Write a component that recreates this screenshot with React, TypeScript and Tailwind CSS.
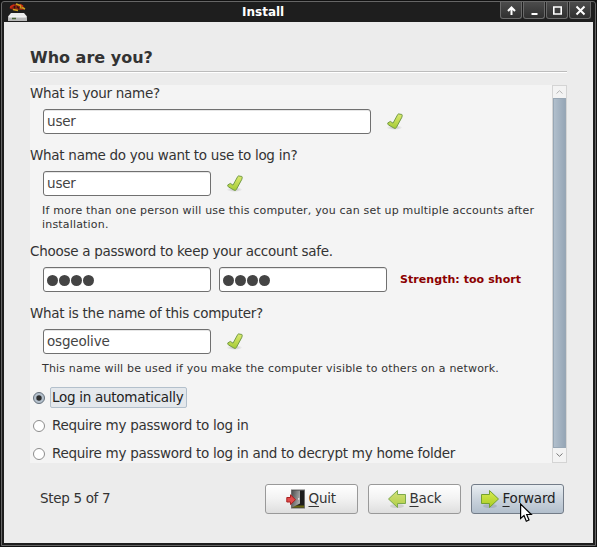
import type { ReactNode } from 'react';

function Label({ children }: { children: ReactNode }) {
  return <div className="h-4 whitespace-nowrap text-[13.5px] leading-4 tracking-[-0.28px]">{children}</div>;
}

function Note({ children }: { children: ReactNode }) {
  return (
    <div className="ml-3 mt-2 -mb-px whitespace-nowrap text-[11px] leading-[14px] tracking-[0.18px]">{children}</div>
  );
}

function Field({ value, wide = false, secret = false }: { value: string; wide?: boolean; secret?: boolean }) {
  return (
    <div
      className={`flex h-[25px] items-center rounded-[3px] border border-[#707070] bg-white pl-[3px] text-[13.5px] tracking-[-0.18px] text-[#444] shadow-[inset_0_1px_0_#e6e6e6] ${
        wide ? 'w-[328px]' : 'w-[168px]'
      }`}
    >
      {secret ? (
        <span className="flex gap-px pt-[2px]">
          {value.split('').map((_, i) => (
            <i key={i} className="size-[11px] rounded-full bg-[#444]" />
          ))}
        </span>
      ) : (
        value
      )}
    </div>
  );
}

function Check() {
  return (
    <svg className="ml-4 mt-1 block" width="17" height="18" viewBox="0 0 17 18">
      <defs>
        <linearGradient id="ck" x1="0" y1="0" x2="0" y2="1">
          <stop offset="0" stopColor="#dcea70" />
          <stop offset="1" stopColor="#a5cc35" />
        </linearGradient>
        <radialGradient id="cks">
          <stop offset="0" stopColor="#000" stopOpacity=".22" />
          <stop offset="1" stopColor="#000" stopOpacity="0" />
        </radialGradient>
      </defs>
      <ellipse cx="7.5" cy="14.6" rx="8" ry="2.4" fill="url(#cks)" />
      <path
        d="M.8 9.9 L3.4 8.4 L6 10.2 L10.8 1.4 Q11.2 .7 12 1 L14.8 1.5 Q15.4 1.7 15.2 2.4 L14.9 4.2 L9.3 14.6 Q8.4 16 7 15.1 L1.3 11.8 Q.5 11 .8 9.9Z"
        fill="url(#ck)"
        stroke="#739b45"
        strokeWidth="1"
      />
    </svg>
  );
}

function Radio({ label, on = false }: { label: string; on?: boolean }) {
  return (
    <div className="flex h-5 items-center">
      <svg className="ml-[3px] mt-px shrink-0" width="12" height="12" viewBox="0 0 12 12">
        <circle cx="6" cy="6" r="5.5" fill={on ? '#b4c0cc' : '#fff'} stroke={on ? '#66717c' : '#8c8c8c'} />
        {on && <circle cx="6" cy="6" r="2.7" fill="#2d2d2d" />}
      </svg>
      <div
        className={`ml-[5px] flex h-[21px] shrink-0 items-center whitespace-nowrap rounded-[2px] border px-px pt-px text-[13.5px] tracking-[-0.28px] ${
          on ? 'w-[137px] border-[#b3c0cc] bg-[#e4e8ec] text-[#222]' : 'border-transparent'
        }`}
      >
        {label}
      </div>
    </div>
  );
}

function Arrow({ back = false }: { back?: boolean }) {
  return (
    <svg width="20" height="20" viewBox="0 0 20 20" className="block">
      <defs>
        <linearGradient id={back ? 'ab' : 'af'} x1="0" y1="0" x2="0" y2="1">
          <stop offset="0" stopColor={back ? '#d2e07a' : '#d8ec52'} />
          <stop offset="1" stopColor={back ? '#b1cf45' : '#a8cb22'} />
        </linearGradient>
      </defs>
      <ellipse cx="10" cy="17" rx="7" ry="2" fill="#000" opacity=".1" />
      <path
        d="M1.5 5.5H9.5V1.5L18.5 10L9.5 18.5V14.5H1.5Z"
        transform={back ? 'translate(20 0) scale(-1 1)' : undefined}
        fill={`url(#${back ? 'ab' : 'af'})`}
        stroke={back ? '#7da94c' : '#74a12f'}
        strokeLinejoin="round"
      />
    </svg>
  );
}

function Door() {
  return (
    <svg width="20" height="20" viewBox="0 0 20 20" className="block">
      <defs>
        <linearGradient id="door" x1="0" y1="0" x2="1" y2="0.4">
          <stop offset="0" stopColor="#4e4e4e" />
          <stop offset="1" stopColor="#a8a8a8" />
        </linearGradient>
      </defs>
      <rect x="5.5" y="1" width="13" height="18" fill="#1c1c1c" stroke="#6d6d6d" />
      <path d="M6 18.5V16.5H18V18.5Z" fill="#66650f" />
      <path d="M6 1.5H14V14.5L6 18.5Z" fill="url(#door)" />
      <rect x="12" y="9" width="1.3" height="1.8" fill="#ddd" />
      <path d="M.8 8.5H4.5V5.8L9.5 10.7L4.5 15.6V13H.8Z" fill="#e04a4a" stroke="#a82020" />
    </svg>
  );
}

function PushButton({ icon, text, primary = false }: { icon: ReactNode; text: string; primary?: boolean }) {
  return (
    <div
      className={`flex h-[30px] w-[93px] items-center rounded-[3px] border text-[13.5px] tracking-[-0.2px] ${
        primary
          ? 'border-[#737c88] bg-linear-to-b from-[#e9eef2] via-[#cbd4dd] to-[#b2bfcc] text-[#222]'
          : 'border-[#999] bg-linear-to-b from-white via-[#f2f2f2] to-[#dedede]'
      } ${text === 'Quit' ? 'pl-[20px]' : text === 'Back' ? 'pl-[18px]' : 'pl-[8px]'}`}
    >
      {icon}
      <span className="mb-[2px] ml-[2.5px] leading-4">
        <span className="underline decoration-1 underline-offset-[3px]">{text[0]}</span>
        {text.slice(1)}
      </span>
    </div>
  );
}

function WinButton({ children }: { children: ReactNode }) {
  return (
    <div className="flex h-[17px] w-[22px] items-center justify-center rounded-b-[3px] border border-t-0 border-[#6a6a6a] bg-linear-to-b from-[#4c4c4c] to-[#303030]">
      <svg width="11" height="11" viewBox="0 0 11 11" fill="none" stroke="#fff" strokeWidth="2">
        {children}
      </svg>
    </div>
  );
}

function DiskIcon() {
  return (
    <svg width="20" height="18" viewBox="0 0 20 18">
      <path d="M2 4.5L4 2L9 .5L13 2L16 4L17 6.5L13 7L10 6.5L9 8L4 6.5Z" fill="#8f2412" />
      <path d="M2.5 5.5L3 3.5L6 2M12 1.5L15 3.5" stroke="#cf2a12" strokeWidth="1.8" fill="none" />
      <path d="M8 1L12.5 2.5L13 5.5M14 4.5L17 6M5 6.5L10 7.5" stroke="#c9a21c" strokeWidth="1.5" fill="none" />
      <path d="M6.5 3V5.5M9 3.5L11 5.5" stroke="#2b1510" strokeWidth="1.6" />
      <path d="M3 10H16L19 13.5V18H0V13.5Z" fill="#ececec" />
      <path d="M0 14H19V18H0Z" fill="#b9b9b9" />
      <path d="M1 14H18" stroke="#f9f9f9" />
      <path d="M4 15.5H8" stroke="#4b6535" strokeWidth="1.5" />
    </svg>
  );
}

export default function App() {
  return (
    <div className="relative h-[547px] w-[597px] overflow-hidden bg-[#111] font-['DejaVu_Sans',sans-serif] text-[#333]">
      <div className="flex h-full flex-col rounded-t-[4px] border border-[#111]">
        <div className="flex flex-1 flex-col rounded-t-[3px] border border-[#666] bg-[#1e1e1e] px-[2px] pb-[2px]">
          <div className="flex h-5 shrink-0 items-start">
            <div className="ml-[4px] w-[100px] pt-px"><DiskIcon /></div>
            <div className="flex-1 pl-[134px] text-[12px] font-bold leading-5 text-white">Install</div>
            <div className="mr-[2px] flex gap-px">
              <WinButton><path d="M5.5 10V3M2 6L5.5 2.5L9 6" /></WinButton>
              <WinButton><path d="M2.5 9H8.5" /></WinButton>
              <WinButton><path d="M1.8 2H9.2V9H1.8Z" strokeWidth="1.6" /></WinButton>
              <WinButton><path d="M1.5 1.5L9.5 9.5M9.5 1.5L1.5 9.5" /></WinButton>
            </div>
          </div>
          <div className="flex flex-1 flex-col bg-[#ececec] px-[26px]">
            <h1 className="mt-[25px] h-[22px] whitespace-nowrap text-[16px] font-bold leading-[22px]">Who are you?</h1>
            <div className="mt-[2px] h-[2px] border-b border-t border-b-white border-t-[#bcbcbc]" />
            <div className="mt-3 flex h-[378px]">
              <div className="w-[522px] shrink-0 bg-[#f4f4f4]">
                <Label>What is your name?</Label>
                <div className="ml-[13px] mt-2 flex"><Field value="user" wide /><Check /></div>
                <div className="mt-[13px]"><Label>What name do you want to use to log in?</Label></div>
                <div className="ml-[13px] mt-2 flex"><Field value="user" /><Check /></div>
                <Note>If more than one person will use this computer, you can set up multiple accounts after<br />installation.</Note>
                <div className="mt-3"><Label>Choose a password to keep your account safe.</Label></div>
                <div className="ml-[13px] mt-2 flex items-center gap-2">
                  <Field value="user" secret />
                  <Field value="user" secret />
                  <span className="ml-[5px] whitespace-nowrap pt-[2px] text-[11px] font-bold tracking-[0.06px] text-[#8b0000]">Strength: too short</span>
                </div>
                <div className="mt-[13px]"><Label>What is the name of this computer?</Label></div>
                <div className="ml-[13px] mt-2 flex"><Field value="osgeolive" /><Check /></div>
                <Note>This name will be used if you make the computer visible to others on a network.</Note>
                <div className="mt-3 flex flex-col gap-2">
                  <Radio label="Log in automatically" on />
                  <Radio label="Require my password to log in" />
                  <Radio label="Require my password to log in and to decrypt my home folder" />
                </div>
              </div>
              <div className="flex w-[15px] flex-col border border-[#d4d4d4] bg-[#f3f3f3]">
                <div className="flex h-3 items-center justify-center">
                  <svg width="7" height="4" viewBox="0 0 7 4" fill="none" stroke="#b4b4b4"><path d="M.5 3.5L3.5 .7L6.5 3.5" /></svg>
                </div>
                <div className="flex-1 border border-[#98a7b5] bg-linear-to-r from-[#b1bfcc] to-[#96a6b6]" />
                <div className="flex h-[14px] items-center justify-center">
                  <svg width="7" height="4" viewBox="0 0 7 4" fill="none" stroke="#777"><path d="M.5 .5L3.5 3.3L6.5 .5" /></svg>
                </div>
              </div>
            </div>
            <div className="mt-[21px] flex h-[30px] items-center">
              <div className="w-[225px] whitespace-nowrap pb-[2px] pl-[10px] text-[13.5px] tracking-[-0.32px]">Step 5 of 7</div>
              <div className="ml-[10px] flex gap-[10px]">
                <PushButton icon={<Door />} text="Quit" />
                <PushButton icon={<Arrow back />} text="Back" />
                <PushButton icon={<Arrow />} text="Forward" primary />
              </div>
            </div>
          </div>
        </div>
      </div>
      <svg className="absolute left-[520px] top-[503px]" width="13" height="20" viewBox="0 0 13 20">
        <path d="M.6 1V15.5L4 12.5L6.3 18.3L9 17L6.7 11.5H11.3Z" fill="#fff" stroke="#000" strokeWidth="1.2" />
      </svg>
    </div>
  );
}
